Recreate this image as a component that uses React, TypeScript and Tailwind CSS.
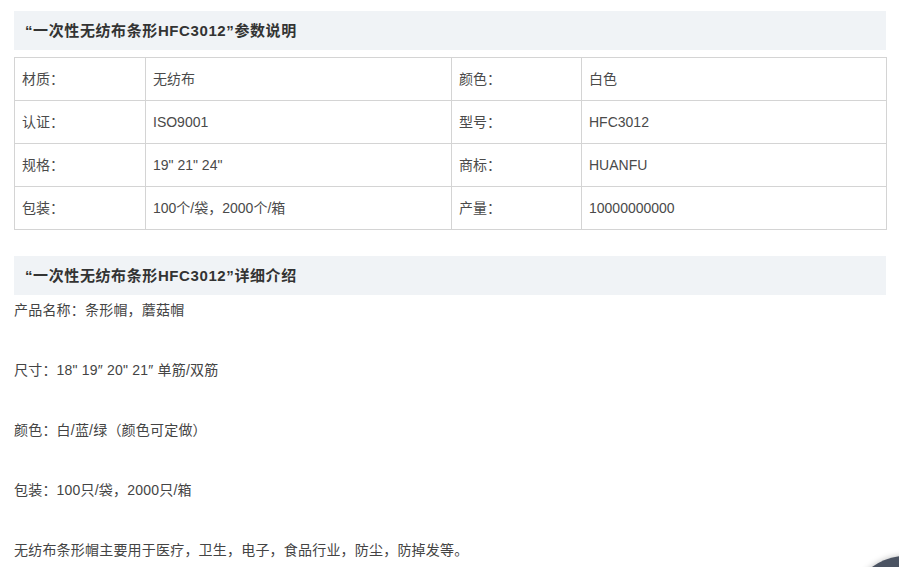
const params: [string, string, string, string][] = [
  ['材质：', '无纺布', '颜色：', '白色'],
  ['认证：', 'ISO9001', '型号：', 'HFC3012'],
  ['规格：', '19" 21" 24"', '商标：', 'HUANFU'],
  ['包装：', '100个/袋，2000个/箱', '产量：', '10000000000'],
];

const details = [
  '产品名称：条形帽，蘑菇帽',
  '尺寸：18" 19″ 20" 21″ 单筋/双筋',
  '颜色：白/蓝/绿（颜色可定做）',
  '包装：100只/袋，2000只/箱',
  '无纺布条形帽主要用于医疗，卫生，电子，食品行业，防尘，防掉发等。',
];

function SectionTitle({ children }: { children: React.ReactNode }) {
  return (
    <div className="h-[39px] bg-[#f0f3f6] flex items-center pl-[11px] pt-[1px] text-[15px] tracking-[0.6px] font-bold text-[#333]">
      {children}
    </div>
  );
}

export default function App() {
  return (
    <div
      className="relative w-[899px] h-[567px] overflow-hidden bg-white text-[14px] text-[#444]"
      style={{ fontFamily: '"Liberation Sans", "Noto Sans CJK SC", sans-serif' }}
    >
      <div className="w-[872px] ml-[14px] pt-[11px]">
        <SectionTitle>“一次性无纺布条形HFC3012”参数说明</SectionTitle>

        <table className="mt-[7px] w-[872px] border-collapse table-fixed">
          <colgroup>
            <col className="w-[131px]" />
            <col className="w-[306px]" />
            <col className="w-[130px]" />
            <col className="w-[305px]" />
          </colgroup>
          <tbody>
            {params.map((row) => (
              <tr key={row[0]} className="h-[43px]">
                {row.map((cell, i) => (
                  <td key={i} className="border border-[#d4d4d4] pl-[7px] align-middle text-[#4a4a4a]">
                    {cell}
                  </td>
                ))}
              </tr>
            ))}
          </tbody>
        </table>

        <div className="mt-[26px]">
          <SectionTitle>“一次性无纺布条形HFC3012”详细介绍</SectionTitle>
        </div>

        <div className="mt-[5px] flex flex-col gap-[40px] leading-[20px] tracking-[0.2px]">
          {details.map((line) => (
            <p key={line}>{line}</p>
          ))}
        </div>
      </div>

      {/* floating button peeking in at the corner */}
      <div className="absolute left-[850px] top-[556px] w-[110px] h-[110px] rounded-full bg-[#4b5362] shadow-[0_0_6px_rgba(0,0,0,0.25)]" />
    </div>
  );
}
